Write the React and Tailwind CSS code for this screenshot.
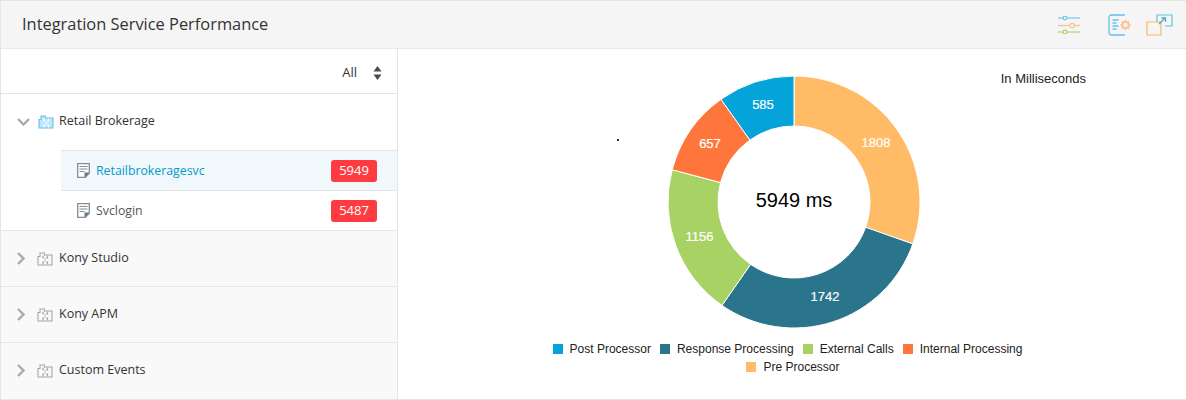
const SEGMENTS = [
  { value: 1808, color: '#ffbb66', lx: 82, ly: 72 },
  { value: 1742, color: '#2a748c', lx: 31, ly: 226 },
  { value: 1156, color: '#a8d263', lx: -94.5, ly: 165.5 },
  { value: 657, color: '#ff763c', lx: -84, ly: 72.5 },
  { value: 585, color: '#04a3d9', lx: -31, ly: 34 },
]

const LEGEND_TOP = [
  { label: 'Post Processor', color: '#04a3d9' },
  { label: 'Response Processing', color: '#2a748c' },
  { label: 'External Calls', color: '#a8d263' },
  { label: 'Internal Processing', color: '#ff763c' },
]

const CX = 130
const CY = 130
const OUTER = 126
const INNER = 76

function arcPath(start, end) {
  const pt = (r, a) => `${CX + r * Math.sin(a)} ${CY - r * Math.cos(a)}`
  const large = end - start > Math.PI ? 1 : 0
  return `M${pt(OUTER, start)} A${OUTER} ${OUTER} 0 ${large} 1 ${pt(OUTER, end)} L${pt(INNER, end)} A${INNER} ${INNER} 0 ${large} 0 ${pt(INNER, start)} Z`
}

function Donut() {
  const total = SEGMENTS.reduce((sum, s) => sum + s.value, 0)
  let angle = 0
  return (
    <svg width="260" height="260" viewBox="0 0 260 260" className="block">
      {SEGMENTS.map((s) => {
        const start = angle
        angle += (s.value / total) * Math.PI * 2
        return <path key={s.value} d={arcPath(start, angle)} fill={s.color} stroke="#fff" strokeWidth="1" />
      })}
      {SEGMENTS.map((s) => (
        <text
          key={s.value}
          x={CX + s.lx}
          y={s.ly}
          fill="#fff"
          stroke="#fff"
          strokeWidth="0.2"
          fontSize="13"
          textAnchor="middle"
          dominantBaseline="middle"
          fontFamily="'Liberation Sans', sans-serif">
          {s.value}
        </text>
      ))}
      <text x={CX} y={CY} fontSize="20" fill="#000" textAnchor="middle" dominantBaseline="middle"
        fontFamily="'Liberation Sans', sans-serif">
        5949 ms
      </text>
    </svg>
  )
}

function LegendItem({ label, color }) {
  return (
    <div className="flex items-center gap-[7px]">
      <span className="w-[10px] h-[10px]" style={{ backgroundColor: color }}></span>
      <span>{label}</span>
    </div>
  )
}

function PuzzleIcon({ color, fill, inner }) {
  return (
    <svg width="16" height="14" viewBox="0 0 16 14" fill="none">
      <path d="M1 4.500h2V1h4.500v2H15v10H1z" fill={fill} stroke={color} strokeWidth="1.100" />
      <path d="M6 3.500v2.500h1.500M6 12.500V10h1.500M10.500 3.500v2.500H9M10.500 12.500V10H9M7.500 8h1.500" stroke={inner} strokeWidth="1.200" />
    </svg>
  )
}

function DocIcon() {
  return (
    <svg width="13" height="15" viewBox="0 0 13 15" fill="none">
      <path d="M.7.7h11.600v9.600l-4 4H.7z" fill="#fff" stroke="#7f8f95" strokeWidth="1.300" />
      <path d="M2.500 3.500h8M2.500 6h8M2.500 8.500h5" stroke="#7f8f95" strokeWidth="1.100" />
      <path d="M7.500 14.500v-5h5z" fill="#66767c" />
    </svg>
  )
}

function ChevronDownIcon() {
  return (
    <svg width="13" height="8" viewBox="0 0 13 8" fill="none">
      <path d="M1 1l5.500 5.500L12 1" stroke="#aaa" strokeWidth="2.400" />
    </svg>
  )
}

function ChevronRightIcon() {
  return (
    <svg width="8" height="13" viewBox="0 0 8 13" fill="none">
      <path d="M1 1l5.500 5.500L1 12" stroke="#aaa" strokeWidth="2.400" />
    </svg>
  )
}

function SliderIcon() {
  return (
    <svg width="22" height="18" viewBox="0 0 22 18" fill="none">
      <path d="M0 2h22" stroke="#6cc1ea" strokeWidth="1.100" />
      <circle cx="7" cy="2" r="1.900" fill="#f5f5f5" stroke="#6cc1ea" strokeWidth="1.100" />
      <path d="M0 9.500h22" stroke="#fdc08a" strokeWidth="1.300" />
      <circle cx="14" cy="9.500" r="2.200" fill="#f5f5f5" stroke="#fdc08a" strokeWidth="1.200" />
      <path d="M0 16h22" stroke="#a8d263" strokeWidth="1.100" />
      <circle cx="7" cy="16" r="1.900" fill="#f5f5f5" stroke="#a8d263" strokeWidth="1.100" />
    </svg>
  )
}

function ConfigIcon() {
  return (
    <svg width="24" height="22" viewBox="0 0 24 22" fill="none">
      <path d="M17 1H3.500a2.500 2.500 0 0 0-2.500 2.500v15A2.500 2.500 0 0 0 3.500 21H17" stroke="#62c0ee" strokeWidth="1.300" />
      <path d="M4.500 6h6M4.500 9h4M4.500 12h6M4.500 15h4" stroke="#62c0ee" strokeWidth="1.300" />
      <circle cx="17.500" cy="11" r="3.200" stroke="#fdc08a" strokeWidth="1.800" />
      <path d="M17.500 5.800v1.500M17.500 14.800v1.500M12.300 11h1.500M21.300 11h1.500M13.800 7.300l1 1M20.200 13.700l1 1M21.200 7.300l-1 1M14.800 13.700l-1 1" stroke="#fdc08a" strokeWidth="1.300" />
    </svg>
  )
}

function PopoutIcon() {
  return (
    <svg width="27" height="22" viewBox="0 0 27 22" fill="none">
      <path d="M11 8V1h15v11h-7" stroke="#62c0ee" strokeWidth="1.200" />
      <path d="M1 8h14v13H1z" stroke="#fdb566" strokeWidth="1.200" />
      <path d="M13 10l6-6M15.500 4H19.500v4" stroke="#4da9d6" strokeWidth="1.300" />
    </svg>
  )
}

function SortIcon() {
  return (
    <svg width="9" height="14" viewBox="0 0 9 14" fill="#4a4a4a">
      <path d="M4.500 0l4 5.500H.5zM4.500 14L.5 8.500h8z" />
    </svg>
  )
}

function ServiceRow({ name, value, active, border }) {
  return (
    <div className={`ml-[60px] pl-[16px] pr-[20px] flex items-center
                     ${border ? 'h-10 border-b border-[#e3e5e6]' : 'h-[39px]'}
                     ${active ? 'bg-[#f0f8fb]' : 'bg-white'}`}>
      <DocIcon />
      <span className={`ml-[6px] flex-1 text-[12.3px] pt-[1px] ${active ? 'text-[#0399c9]' : 'text-[#555]'}`}>{name}</span>
      <span className="w-[46px] h-[22px] rounded-[3px] bg-[#fd3b40] text-white text-[13px] flex items-center justify-center">
        {value}
      </span>
    </div>
  )
}

function CollapsedGroup({ name, last }) {
  return (
    <div className={`h-[56px] flex items-center pl-[16px] bg-[#f9f9f9] ${last ? 'pb-[1px]' : 'border-b border-[#e3e5e6]'}`}>
      <ChevronRightIcon />
      <span className="ml-[12px] flex"><PuzzleIcon color="#a8a8a8" fill="#f9f9f9" inner="#a8a8a8" /></span>
      <span className="ml-[6px] text-[12.5px] text-[#333]">{name}</span>
    </div>
  )
}

export default function App() {
  return (
    <div className="w-[1186px] h-[400px] overflow-hidden bg-white border border-[#e3e5e6] border-r-0 flex flex-col font-['Open_Sans','Noto_Sans',sans-serif]">
      {/* 헤더 */}
      <div className="h-[48px] shrink-0 bg-[#f5f5f5] border-b border-[#e9e9e9] flex items-center pl-[21px] pr-[13px]">
        <h1 className="flex-1 text-[16.4px] text-[#333]">Integration Service Performance</h1>
        <SliderIcon />
        <span className="ml-[28px] flex"><ConfigIcon /></span>
        <span className="ml-[14px] flex"><PopoutIcon /></span>
      </div>

      <div className="flex-1 flex min-h-0">
        {/* 왼쪽 목록 */}
        <div className="w-[397px] shrink-0 border-r border-[#e3e5e6] flex flex-col">
          <div className="h-[45px] shrink-0 border-b border-[#e3e5e6] flex items-center justify-end pt-[3px] pr-[15px] gap-[16px] text-[13px] text-[#333]">
            <span>All</span>
            <SortIcon />
          </div>
          <div className="h-[56px] shrink-0 flex items-center pl-[16px] pb-[1px]">
            <ChevronDownIcon />
            <span className="ml-[8px] flex"><PuzzleIcon color="#62c0ee" fill="#bfe6f8" inner="#fff" /></span>
            <span className="ml-[5px] text-[12.5px] text-[#333]">Retail Brokerage</span>
          </div>
          <div className="border-t border-[#e3e5e6] ml-[60px]"></div>
          <ServiceRow name="Retailbrokeragesvc" value="5949" active border />
          <div className="border-b border-[#e3e5e6]">
            <ServiceRow name="Svclogin" value="5487" />
          </div>
          <CollapsedGroup name="Kony Studio" />
          <CollapsedGroup name="Kony APM" />
          <CollapsedGroup name="Custom Events" last />
        </div>

        {/* 차트 */}
        <div className="relative flex-1 flex flex-col items-center pt-[23px] pl-[3px] font-['Liberation_Sans',sans-serif]">
          <span className="absolute top-[20px] right-[100px] text-[13px] text-[#222]">In Milliseconds</span>
          <span className="absolute left-[219px] top-[90px] w-[2px] h-[2px] bg-[#333]"></span>
          <Donut />
          <div className="mt-[8px] -ml-[1px] flex flex-col items-center text-xs text-[#222] leading-[18px]">
            <div className="flex gap-[9px] pr-[11px]">
              {LEGEND_TOP.map((item) => <LegendItem key={item.label} {...item} />)}
            </div>
            <LegendItem label="Pre Processor" color="#ffbb66" />
          </div>
        </div>
      </div>
    </div>
  )
}
